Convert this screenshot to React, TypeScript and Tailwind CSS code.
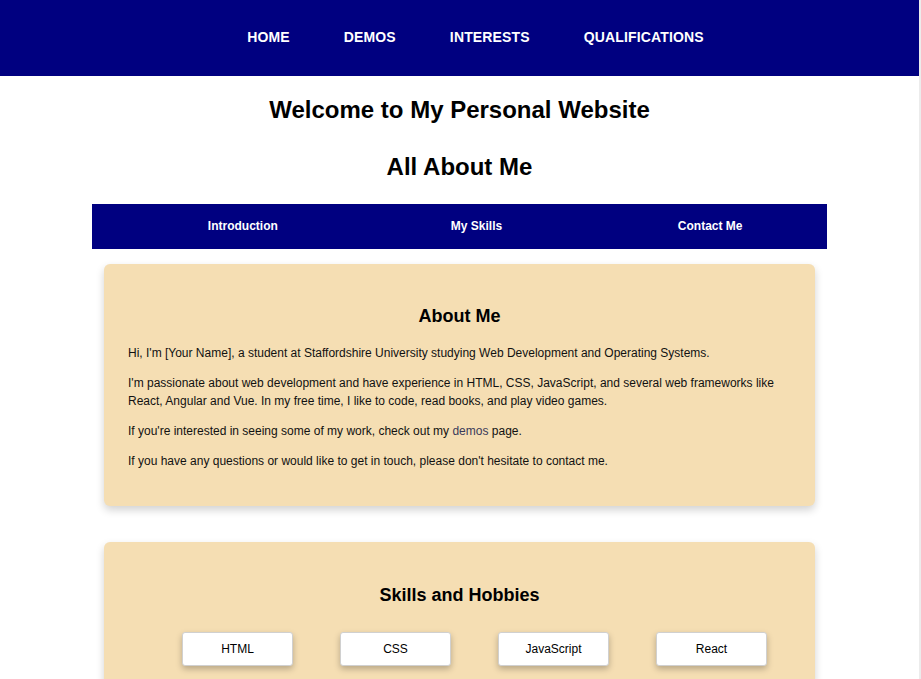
export default function App() {
  const font = "font-['Liberation_Sans',Arial,sans-serif]";
  return (
    <div className={`flex min-h-[679px] w-full bg-white text-black ${font}`}>
      <div className="w-[919px] shrink-0">
        <header className="bg-[#000080] h-[76px] flex items-center justify-center pl-[32px] pb-[2px]">
          <nav className="flex gap-[54px] text-[14px] font-bold text-white uppercase tracking-[0.15px]">
            <a>Home</a>
            <a>Demos</a>
            <a>Interests</a>
            <a>Qualifications</a>
          </nav>
        </header>
        <h1 className="mt-[20px] text-center text-[24px] leading-[28px] font-bold">Welcome to My Personal Website</h1>
        <h2 className="mt-[29px] text-center text-[24px] leading-[28px] font-bold">All About Me</h2>
        <div className="w-[735px] mx-auto mt-[23px]">
          <div className="bg-[#000080] h-[45px] grid grid-cols-3 items-center pl-[34px] pb-[2px] text-white text-[12px] font-bold">
            <span className="text-center">Introduction</span>
            <span className="text-center">My Skills</span>
            <span className="text-center">Contact Me</span>
          </div>
          <section className="mx-3 mt-[15px] bg-[#F5DEB3] rounded-[6px] shadow-[0_4px_8px_rgba(0,0,0,0.18)] p-6">
            <h3 className="mt-[18px] mb-[17px] text-center text-[18px] leading-[21px] font-bold">About Me</h3>
            <div className="flex flex-col gap-3 mb-3 text-[12px] leading-[18px] text-[#111]">
              <p>Hi, I'm [Your Name], a student at Staffordshire University studying Web Development and Operating Systems.</p>
              <p>I'm passionate about web development and have experience in HTML, CSS, JavaScript, and several web frameworks like React, Angular and Vue. In my free time, I like to code, read books, and play video games.</p>
              <p>If you're interested in seeing some of my work, check out my <a className="text-[#3a3a5a]">demos</a> page.</p>
              <p>If you have any questions or would like to get in touch, please don't hesitate to contact me.</p>
            </div>
          </section>
          <section className="mx-3 mt-[36px] bg-[#F5DEB3] rounded-[6px] shadow-[0_4px_8px_rgba(0,0,0,0.18)] p-6 pb-10">
            <h3 className="mt-[19px] mb-[26px] text-center text-[18px] leading-[21px] font-bold">Skills and Hobbies</h3>
            <div className="flex justify-center gap-[47px] pl-[30px]">
              {["HTML", "CSS", "JavaScript", "React"].map((s) => (
                <div
                  key={s}
                  className="w-[111px] h-[34px] flex items-center justify-center bg-white border border-[#d0d0d0] rounded-[3px] shadow-[0_3px_6px_rgba(0,0,0,0.25)] text-[12px]"
                >
                  {s}
                </div>
              ))}
            </div>
          </section>
        </div>
      </div>
      <div className="w-[2px] bg-[#ececec]" />
    </div>
  );
}
